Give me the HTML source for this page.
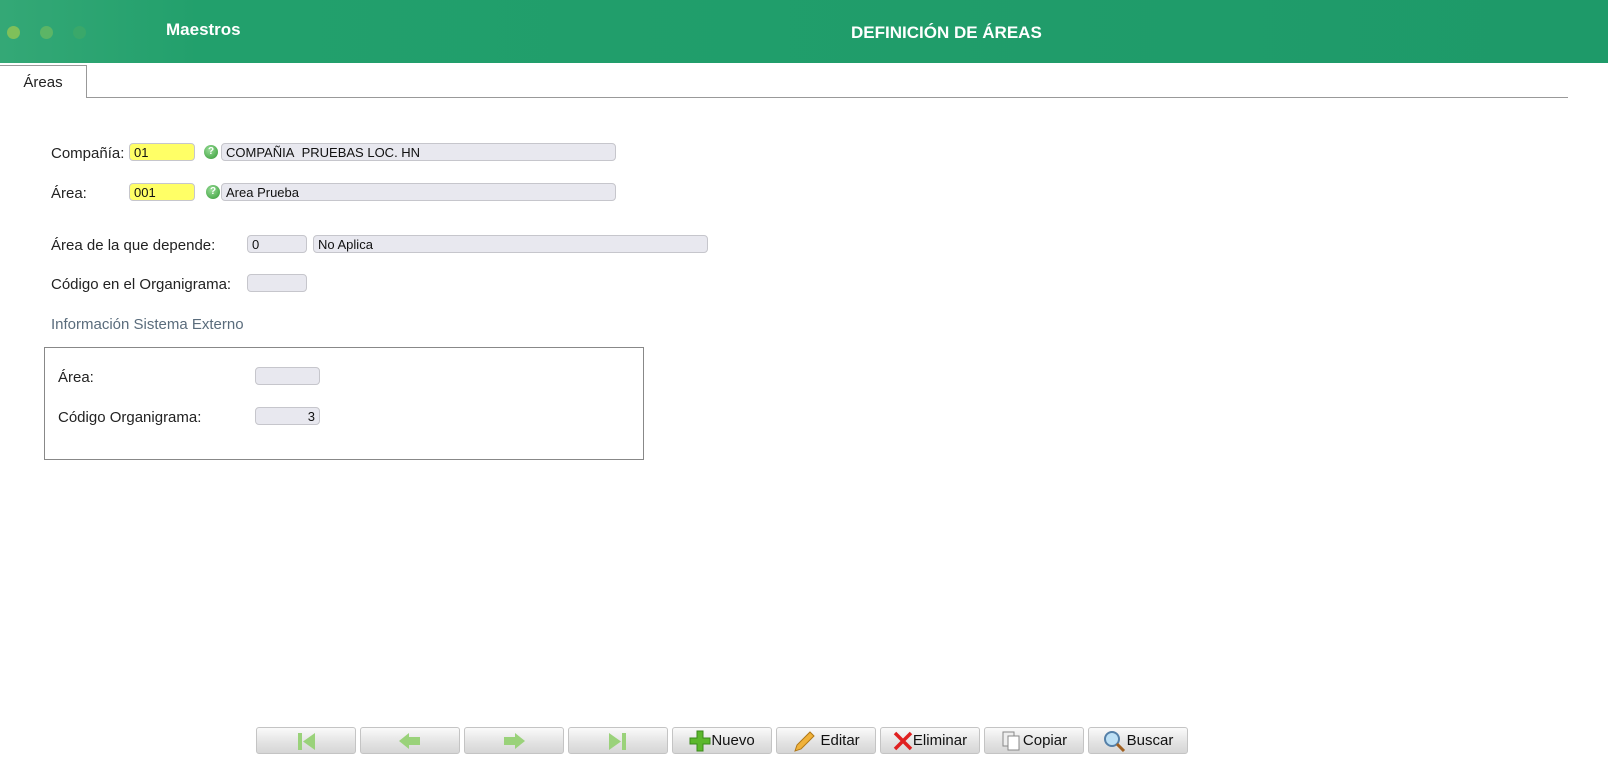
<!DOCTYPE html>
<html><head><meta charset="utf-8"><style>
body{margin:0;width:1608px;height:775px;background:#fff;font-family:"Liberation Sans",sans-serif;position:relative;overflow:hidden}
.hdr{position:absolute;left:0;top:0;width:1608px;height:63px;background:linear-gradient(90deg,#34a876 0,#22a06c 200px,#1e9a69 100%)}
.dot{position:absolute;top:26px;width:13px;height:13px;border-radius:50%}
.t{position:absolute;color:#fff;font-weight:bold;font-size:17px}
.lbl{position:absolute;font-size:15px;color:#222}
.in{position:absolute;height:18px;border:1px solid #c6c6cc;border-radius:4px;background:#e8e8ef;font-size:13px;line-height:18px;padding-left:4px;box-sizing:border-box;color:#111}
.y{background:#ffff66}
.q{position:absolute;width:14px;height:14px;border-radius:50%;background:radial-gradient(circle at 40% 35%,#9d9,#393);color:#fff;font-size:10px;font-weight:bold;text-align:center;line-height:14px}
.btn{position:absolute;top:727px;width:100px;height:27px;border:1px solid #c4c4c4;border-radius:3px;background:linear-gradient(#fafafa,#e2e2e2 60%,#d6d6d6);box-sizing:border-box;font-size:15px;line-height:27px;display:flex;align-items:center;justify-content:center;color:#111}
</style></head><body>
<div class="hdr">
<div class="dot" style="left:7px;background:#7fc05a"></div>
<div class="dot" style="left:40px;background:#5cb566"></div>
<div class="dot" style="left:73px;background:#3aa86a"></div>
<div class="t" style="left:166px;top:20px">Maestros</div>
<div class="t" style="left:851px;top:23px;font-size:17px">DEFINICIÓN DE ÁREAS</div>
</div>
<div style="position:absolute;left:0;top:97px;width:1568px;height:1px;background:#999"></div>
<div style="position:absolute;left:0;top:65px;width:87px;height:33px;border:1px solid #999;border-bottom:none;border-left:none;background:#fff;box-sizing:border-box;font-size:15px;color:#222;text-align:center;line-height:33px">Áreas</div>

<div class="lbl" style="left:51px;top:145px">Compañía:</div>
<div class="in y" style="left:129px;top:143px;width:66px">01</div>
<div class="q" style="left:204px;top:145px">?</div>
<div class="in" style="left:221px;top:143px;width:395px">COMPAÑIA&nbsp; PRUEBAS LOC. HN</div>
<div class="lbl" style="left:51px;top:185px">Área:</div>
<div class="in y" style="left:129px;top:183px;width:66px">001</div>
<div class="q" style="left:206px;top:185px">?</div>
<div class="in" style="left:221px;top:183px;width:395px">Area Prueba</div>

<div class="lbl" style="left:51px;top:237px">Área de la que depende:</div>
<div class="in" style="left:247px;top:235px;width:60px">0</div>
<div class="in" style="left:313px;top:235px;width:395px">No Aplica</div>
<div class="lbl" style="left:51px;top:276px">Código en el Organigrama:</div>
<div class="in" style="left:247px;top:274px;width:60px"></div>
<div class="lbl" style="left:51px;top:316px;color:#5a6c7c">Información Sistema Externo</div>
<div style="position:absolute;left:44px;top:347px;width:600px;height:113px;border:1px solid #888;box-sizing:border-box"></div>
<div class="lbl" style="left:58px;top:369px">Área:</div>
<div class="in" style="left:255px;top:367px;width:65px"></div>
<div class="lbl" style="left:58px;top:409px">Código Organigrama:</div>
<div class="in" style="left:255px;top:407px;width:65px;text-align:right;padding-right:4px">3</div>

<div class="btn" style="left:256px"><svg width="22" height="20"><rect x="3" y="2" width="4" height="17" fill="#9ad27a"/><path d="M20 2L8 10.5L20 19Z" fill="#9ad27a"/></svg></div>
<div class="btn" style="left:360px"><svg width="24" height="20"><path d="M1 10L11 2V6H22V14H11V18Z" fill="#9ad27a"/></svg></div>
<div class="btn" style="left:464px"><svg width="24" height="20"><path d="M23 10L13 2V6H2V14H13V18Z" fill="#9ad27a"/></svg></div>
<div class="btn" style="left:568px"><svg width="22" height="20"><path d="M2 2L14 10.5L2 19Z" fill="#9ad27a"/><rect x="15" y="2" width="4" height="17" fill="#9ad27a"/></svg></div>
<div class="btn" style="left:672px"><svg width="22" height="22"><path d="M8 1H14V8H21V14H14V21H8V14H1V8H8Z" fill="#5cb82c" stroke="#3a8a1a"/></svg>Nuevo</div>
<div class="btn" style="left:776px"><svg width="24" height="22"><path d="M3 21L5 15L18 2L22 6L9 19Z" fill="#f0b23a" stroke="#b07818"/></svg>&nbsp;Editar</div>
<div class="btn" style="left:880px"><svg width="20" height="20"><path d="M2 2L18 18M18 2L2 18" stroke="#e02020" stroke-width="3.5"/></svg>Eliminar</div>
<div class="btn" style="left:984px"><svg width="22" height="22"><rect x="2" y="2" width="11" height="14" fill="#eee" stroke="#888"/><rect x="7" y="6" width="11" height="14" fill="#fff" stroke="#888"/></svg>Copiar</div>
<div class="btn" style="left:1088px"><svg width="24" height="22"><circle cx="9" cy="9" r="7" fill="#bde0f5" stroke="#5580a8" stroke-width="2"/><path d="M14 14L21 21" stroke="#a06020" stroke-width="3"/></svg>Buscar</div>
</body></html>
